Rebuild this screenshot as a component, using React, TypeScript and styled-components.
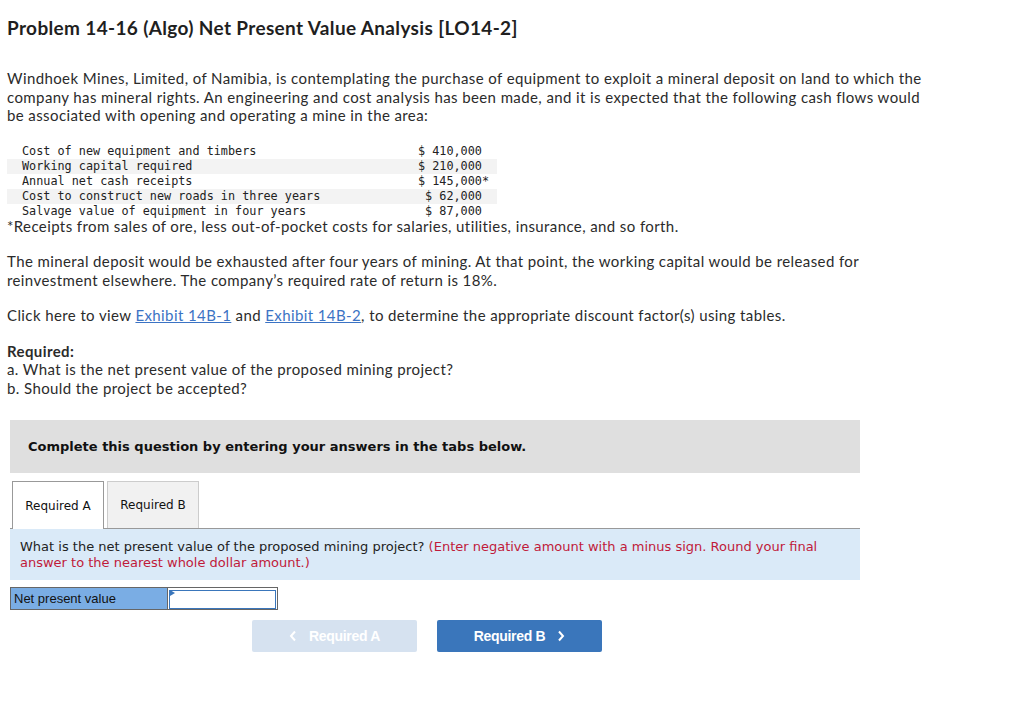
import { createGlobalStyle, styled } from 'styled-components';

const GlobalStyle = createGlobalStyle`
  body {
    margin: 0;
    padding: 0;
    background: #fff;
    color: #2b2b2b;
    font-family: Lato, 'Open Sans', sans-serif;
  }
`;

const Page = styled.div`
  padding: 17px 0 0 7px;
  width: 927px;
`;

const Title = styled.h1`
  margin: 0 0 30px 0;
  font-size: 19px;
  line-height: 22px;
  font-weight: 700;
  color: #1f1f1f;
  letter-spacing: 0.35px;
`;

const Para = styled.p<{ $gap?: number }>`
  margin: 0 0 ${(p) => p.$gap ?? 17}px 0;
  font-size: 15px;
  line-height: 18.5px;
  letter-spacing: 0.4px;
`;

const Table = styled.div`
  margin-top: 19px;
  width: 490px;
  font-family: 'DejaVu Sans Mono', 'Liberation Mono', monospace;
  font-size: 11.8px;
  color: #222;
`;

const Row = styled.div<{ $shade?: boolean }>`
  display: flex;
  height: 15px;
  align-items: center;
  padding-left: 15px;
  background: ${(p) => (p.$shade ? '#f3f3f3' : 'transparent')};
`;

const Label = styled.span`
  flex: 1;
`;

const Amount = styled.span`
  padding-right: 8px;
  text-align: right;
  white-space: pre;
`;

const Note = styled.div`
  margin: -2px 0 17px 0;
  font-size: 15px;
  line-height: 18.5px;
  letter-spacing: 0.4px;
`;

const Link = styled.a`
  color: #3b73c4;
  text-decoration: underline;
`;

const Strong = styled.div`
  font-weight: 700;
  font-size: 15px;
  line-height: 18.5px;
  letter-spacing: 0.4px;
`;

const Section = styled.div`
  margin: 23px 0 0 3px;
  width: 850px;
  font-family: 'DejaVu Sans', Verdana, sans-serif;
`;

const Banner = styled.div`
  background: #dfdfdf;
  height: 53px;
  display: flex;
  align-items: center;
  padding-left: 18px;
  font-size: 13px;
  font-weight: 700;
  color: #111;
`;

const Tabs = styled.div`
  display: flex;
  gap: 3px;
  margin-top: 8px;
  padding-left: 2px;
  border-bottom: 1px solid #999;
`;

const Tab = styled.div<{ $active?: boolean }>`
  width: 92px;
  box-sizing: border-box;
  display: flex;
  align-items: center;
  justify-content: center;
  font-size: 12px;
  color: #111;
  border: 1px solid ${(p) => (p.$active ? '#999' : '#ccc')};
  border-bottom: none;
  background: ${(p) => (p.$active ? '#fff' : '#f1f1f1')};
  margin-bottom: ${(p) => (p.$active ? '-1px' : '0')};
  height: ${(p) => (p.$active ? '48px' : '47px')};
`;

const Question = styled.div`
  background: #daeaf8;
  padding: 10px 30px 9px 10px;
  font-size: 13px;
  line-height: 16px;
  color: #222;
`;

const Red = styled.span`
  color: #c01a3a;
`;

const AnswerRow = styled.div`
  display: flex;
  margin-top: 7px;
  height: 23px;
`;

const AnswerLabel = styled.div`
  width: 157px;
  box-sizing: border-box;
  background: #7aade4;
  border: 1px solid #666;
  border-right: none;
  padding-left: 3px;
  display: flex;
  align-items: center;
  font-family: 'Liberation Sans', Arial, sans-serif;
  font-size: 13px;
  color: #111;
`;

const InputWrap = styled.div`
  position: relative;
  width: 111px;
  box-sizing: border-box;
  border: 1px solid #666;
  padding: 1px;
  background: #fff;
`;

const Input = styled.input`
  width: 100%;
  height: 100%;
  box-sizing: border-box;
  border: 1px solid #3a76bb;
  outline: none;
  padding: 0;
`;

const Flag = styled.span`
  position: absolute;
  left: 2px;
  top: 2px;
  width: 0;
  height: 0;
  border-top: 3px solid transparent;
  border-bottom: 3px solid transparent;
  border-left: 5px solid #3a76bb;
`;

const Nav = styled.div`
  display: flex;
  gap: 20px;
  margin: 10px 0 0 242px;
`;

const NavButton = styled.button<{ $disabled?: boolean }>`
  width: 165px;
  height: 32px;
  border: none;
  border-radius: 2px;
  background: ${(p) => (p.$disabled ? '#d6e2f0' : '#3a76bb')};
  color: #fff;
  font-family: 'Liberation Sans Narrow', 'Liberation Sans', Arial, sans-serif;
  font-size: 14px;
  font-weight: 700;
  display: flex;
  align-items: center;
  justify-content: center;
  gap: 12px;
  letter-spacing: -0.3px;
`;

const Chevron = styled.svg`
  width: 8px;
  height: 12px;
`;

const rows: [string, string][] = [
  ['Cost of new equipment and timbers', '$ 410,000 '],
  ['Working capital required', '$ 210,000 '],
  ['Annual net cash receipts', '$ 145,000*'],
  ['Cost to construct new roads in three years', '$ 62,000 '],
  ['Salvage value of equipment in four years', '$ 87,000 '],
];

function App() {
  return (
    <>
      <GlobalStyle />
      <Page>
        <Title>Problem 14-16 (Algo) Net Present Value Analysis [LO14-2]</Title>

        <Para $gap={0}>
          Windhoek Mines, Limited, of Namibia, is contemplating the purchase of equipment to exploit a mineral deposit on
          land to which the company has mineral rights. An engineering and cost analysis has been made, and it is
          expected that the following cash flows would be associated with opening and operating a mine in the area:
        </Para>

        <Table>
          {rows.map(([label, amt], i) => (
            <Row key={label} $shade={i % 2 === 1}>
              <Label>{label}</Label>
              <Amount>{amt}</Amount>
            </Row>
          ))}
        </Table>
        <Note>*Receipts from sales of ore, less out-of-pocket costs for salaries, utilities, insurance, and so forth.</Note>

        <Para>
          The mineral deposit would be exhausted after four years of mining. At that point, the working capital would be
          released for reinvestment elsewhere. The company’s required rate of return is 18%.
        </Para>

        <Para>
          Click here to view <Link>Exhibit 14B-1</Link> and <Link>Exhibit 14B-2</Link>, to determine the appropriate
          discount factor(s) using tables.
        </Para>

        <Strong>Required:</Strong>
        <Para $gap={0}>a. What is the net present value of the proposed mining project?</Para>
        <Para $gap={0}>b. Should the project be accepted?</Para>

        <Section>
          <Banner>Complete this question by entering your answers in the tabs below.</Banner>
          <Tabs>
            <Tab $active>Required A</Tab>
            <Tab>Required B</Tab>
          </Tabs>
          <Question>
            What is the net present value of the proposed mining project?{' '}
            <Red>(Enter negative amount with a minus sign. Round your final answer to the nearest whole dollar amount.)</Red>
          </Question>
          <AnswerRow>
            <AnswerLabel>Net present value</AnswerLabel>
            <InputWrap>
              <Input />
              <Flag />
            </InputWrap>
          </AnswerRow>
          <Nav>
            <NavButton $disabled>
              <Chevron viewBox="0 0 8 12">
                <path d="M6 1.5 L2 6 L6 10.5" stroke="#fff" strokeWidth="2" fill="none" />
              </Chevron>
              Required A
            </NavButton>
            <NavButton>
              Required B
              <Chevron viewBox="0 0 8 12">
                <path d="M2 1.5 L6 6 L2 10.5" stroke="#fff" strokeWidth="2" fill="none" />
              </Chevron>
            </NavButton>
          </Nav>
        </Section>
      </Page>
    </>
  );
}

export default App;
